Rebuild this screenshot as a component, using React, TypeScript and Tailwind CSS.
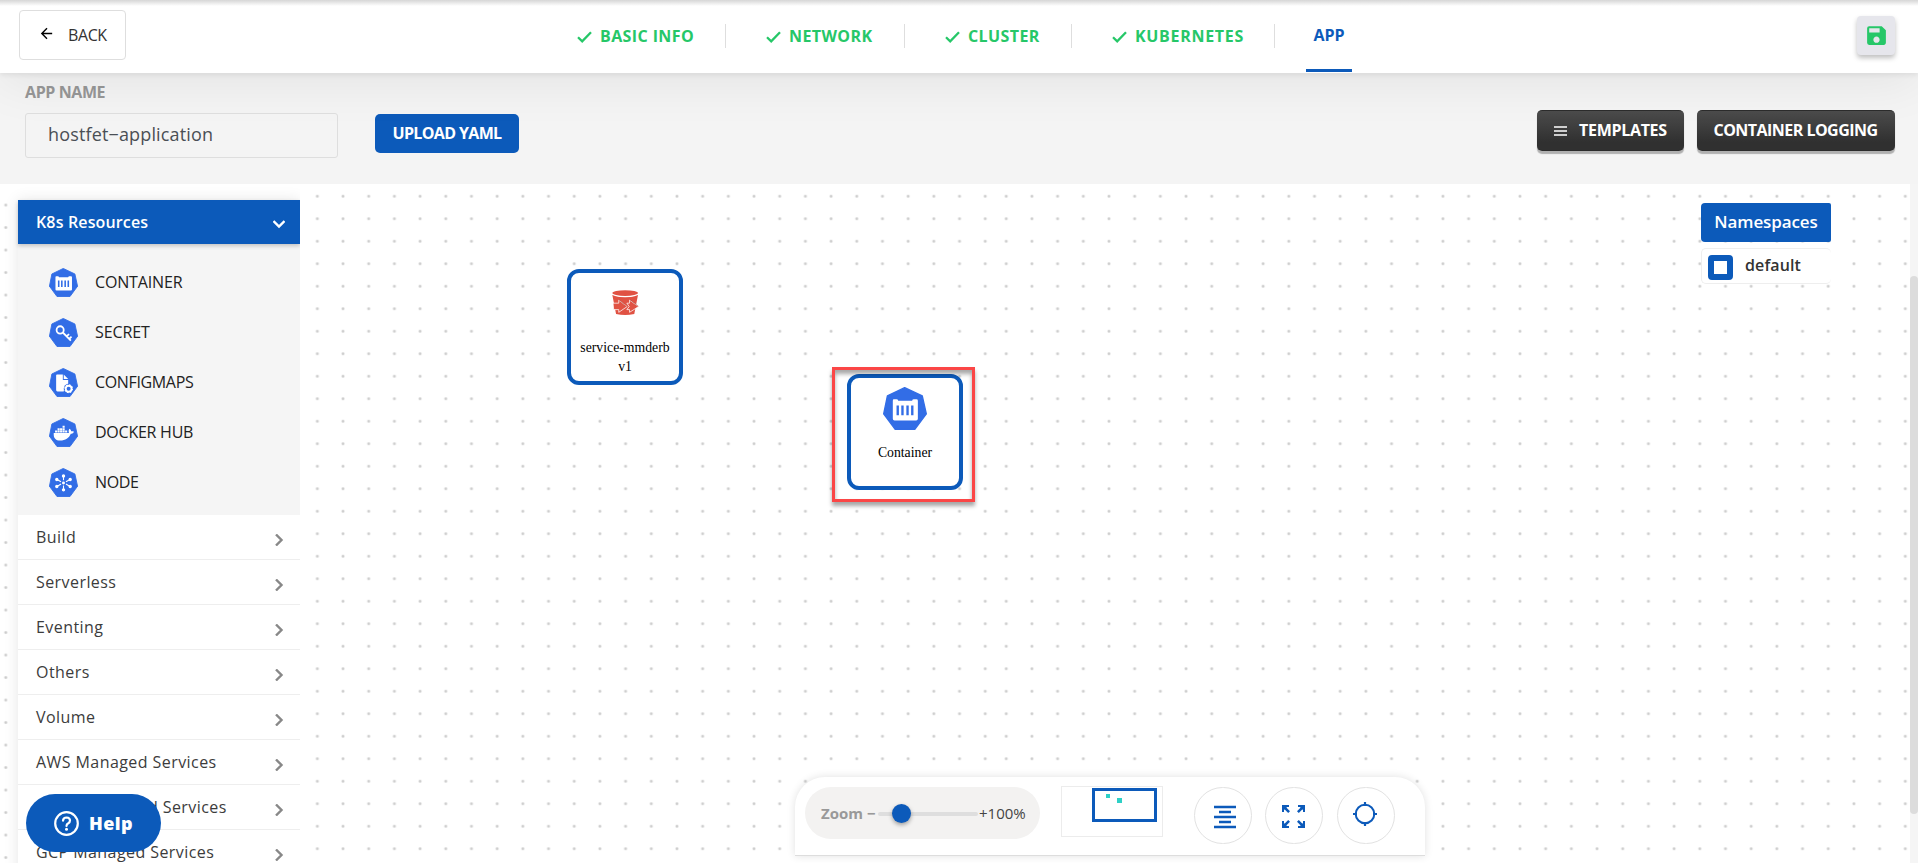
import type { ReactNode } from "react";
import { MdArrowBack, MdSave } from "react-icons/md";
import { FaDocker } from "react-icons/fa";

const STEPS = [
  { label: "BASIC INFO", width: "w-[93px]", tracking: "tracking-[0.4px]" },
  { label: "NETWORK", width: "w-[83px]", tracking: "tracking-[0.4px]" },
  { label: "CLUSTER", width: "w-[71px]", tracking: "tracking-[0.4px]" },
  { label: "KUBERNETES", width: "w-[107px]", tracking: "tracking-[0.7px]" },
];

function Heptagon({ className, children }: { className: string; children: ReactNode }) {
  return (
    <svg viewBox="0 0 130 126" className={className} preserveAspectRatio="none">
      <path
        d="M64 2 116 26 128 79 94 124H36L2 79 13 26Z"
        fill="#326de6"
        stroke="#326de6"
        strokeWidth="4"
        strokeLinejoin="round"
      />
      {children}
    </svg>
  );
}

function ContainerGlyph() {
  return (
    <>
      <path
        d="M32 36h8q4 0 5 4h41q1-4 5-4h8q4 0 4 4v53q0 5-5 5H34q-5 0-5-5V40q0-4 3-4Z"
        fill="#fff"
      />
      <path d="M40 54h7v29h-7zM54 54h7v29h-7zM69 54h7v29h-7zM83 54h7v29h-7z" fill="#326de6" />
    </>
  );
}

function SecretGlyph() {
  return (
    <g fill="none" stroke="#fff" strokeWidth="8">
      <circle cx="50" cy="52" r="16" />
      <path d="M62 63 98 98M78 80l12-10M90 91l11-10" />
    </g>
  );
}

function ConfigGlyph() {
  return (
    <>
      <path d="M34 28h28v24h24v22q-18 2-20 28H38q-6 0-6-6V32q0-4 4-4Z" fill="#fff" />
      <path d="M66 28l20 20H66Z" fill="#fff" />
      <circle cx="88" cy="90" r="22" fill="#326de6" />
      <circle cx="88" cy="90" r="13" fill="none" stroke="#fff" strokeWidth="8" />
      <circle cx="88" cy="90" r="17" fill="none" stroke="#fff" strokeWidth="5" strokeDasharray="7 6.3" />
    </>
  );
}

function NodeGlyph() {
  return (
    <g stroke="#fff" strokeWidth="5" fill="#fff">
      <path d="M65 33v20M65 76v21M34 49l20 11M96 49 76 60M34 81l20-11M96 81 76 70" />
      <circle cx="65" cy="65" r="4" />
      <circle cx="65" cy="35" r="5" />
      <circle cx="65" cy="95" r="5" />
      <circle cx="35" cy="50" r="5" />
      <circle cx="95" cy="50" r="5" />
      <circle cx="35" cy="80" r="5" />
      <circle cx="95" cy="80" r="5" />
    </g>
  );
}

const RESOURCES: { label: string; tracking: string; glyph: ReactNode }[] = [
  { label: "CONTAINER", tracking: "tracking-[-0.15px]", glyph: <ContainerGlyph /> },
  { label: "SECRET", tracking: "tracking-[-0.1px]", glyph: <SecretGlyph /> },
  { label: "CONFIGMAPS", tracking: "tracking-[-0.35px]", glyph: <ConfigGlyph /> },
  {
    label: "DOCKER HUB",
    tracking: "tracking-[-0.25px]",
    glyph: <FaDocker x={20} y={20} size={92} color="#fff" />,
  },
  { label: "NODE", tracking: "tracking-[-0.4px]", glyph: <NodeGlyph /> },
];

const GROUPS = [
  "Build",
  "Serverless",
  "Eventing",
  "Others",
  "Volume",
  "AWS Managed Services",
  "Azure Managed Services",
  "GCP Managed Services",
];

function TopBar() {
  return (
    <header className="relative z-20 flex h-[73px] shrink-0 bg-white shadow-[0_2px_5px_rgba(0,0,0,0.07),0_10px_50px_rgba(0,0,0,0.07)]">
      <div className="absolute inset-x-0 top-0 h-[6px] bg-linear-to-b from-[#d6d6d6] to-white" />
      <div className="w-[577px] pl-[19px] pt-[10px]">
        <button className="flex h-[50px] w-[107px] items-center rounded-[4px] border border-[#dedede] bg-white pb-[1px] pl-[18px] text-[16px] text-[#333]">
          <MdArrowBack className="mb-[2px] size-[17px] text-black" />
          <span className="ml-[13px] tracking-[-0.4px]">BACK</span>
        </button>
      </div>
      <nav className="flex text-[16px] font-bold text-[#26c768]">
        {STEPS.map((s) => (
          <div key={s.label} className="flex">
            <div className="flex h-[72px] items-center">
              <svg viewBox="0 0 15 12" className="mt-[2px] h-[12px] w-[15px]">
                <path d="M1 6.2 5.200 10.300 14 1.300" fill="none" stroke="currentColor" strokeWidth="2.300" />
              </svg>
              <span className={`ml-[8px] whitespace-nowrap ${s.width} ${s.tracking}`}>{s.label}</span>
            </div>
            <div className="ml-[32px] mr-[40px] mt-[24px] h-[24px] w-px bg-[#dedede]" />
          </div>
        ))}
        <div className="-ml-[9px] mb-[1px] flex w-[46px] items-center justify-center border-b-[3px] border-[#0c5aba] text-[#0c5aba]">
          APP
        </div>
      </nav>
      <button className="ml-auto mr-[23px] mt-[16px] flex h-[39px] w-[38px] items-center justify-center rounded-[4px] bg-[#e6e6ec] shadow-[0_3px_5px_rgba(0,0,0,0.25)]">
        <MdSave className="size-[25px] text-[#26c768]" />
      </button>
    </header>
  );
}

function AppForm() {
  const dark =
    "flex h-[41px] items-center rounded-[5px] border-y border-[#2c2c2c] bg-linear-to-b from-[#4c4c4c] to-[#303030] to-80% pb-[1px] text-[16px] font-bold text-white shadow-[0_3px_1px_rgba(0,0,0,0.28)]";
  return (
    <section className="flex h-[111px] shrink-0 bg-[#f4f4f4] pl-[25px] pr-[23px]">
      <div className="w-[313px] pt-[7px]">
        <label className="block h-[24px] text-[16px] font-bold leading-[24px] tracking-[-0.4px] text-[#979797]">
          APP NAME
        </label>
        <div className="mt-[9px] flex h-[45px] items-center rounded-[3px] border border-[#dedede] pb-[2px] pl-[22px] text-[18px] text-[#4a4f55]">
          <span className="tracking-[0.15px]">hostfet−application</span>
        </div>
      </div>
      <button className="ml-[37px] mt-[41px] h-[39px] w-[144px] rounded-[5px] bg-[#0c5aba] pb-[1px] text-[16px] font-bold tracking-[-0.65px] text-white">
        UPLOAD YAML
      </button>
      <div className="ml-auto mt-[37px] flex gap-[13px]">
        <button className={`${dark} w-[147px] pl-[17px]`}>
          <svg viewBox="0 0 13 10" className="mt-[1px] h-[10px] w-[13px]">
            <path d="M0 1h13M0 5h13M0 9h13" stroke="#fff" strokeWidth="1.3" />
          </svg>
          <span className="ml-[12px] tracking-[-0.3px]">TEMPLATES</span>
        </button>
        <button className={`${dark} w-[198px] justify-center pr-[1px]`}>
          <span className="whitespace-nowrap tracking-[-0.53px]">CONTAINER LOGGING</span>
        </button>
      </div>
    </section>
  );
}

function Chevron({ className, d }: { className: string; d: string }) {
  return (
    <svg viewBox="0 0 12 12" className={className}>
      <path d={d} fill="none" stroke="currentColor" strokeWidth="2.4" />
    </svg>
  );
}

function Sidebar() {
  return (
    <aside className="absolute left-0 top-0 h-[679px] w-[300px] overflow-hidden pl-[18px] pt-[16px]">
      <div className="h-[700px] bg-white shadow-[0_0_14px_rgba(0,0,0,0.1)]">
        <div className="relative flex h-[44px] items-center justify-between bg-[#0c5aba] pl-[18px] pr-[15px] text-white shadow-[0_2px_4px_rgba(0,0,0,0.2)]">
          <span className="text-[16px] font-semibold tracking-[0.15px]">K8s Resources</span>
          <Chevron className="mt-[4px] size-[12px]" d="M.5 3 6 8.5 11.5 3" />
        </div>
        <div className="h-[271px] bg-[#f5f5f5] pt-[13px]">
          {RESOURCES.map((r) => (
            <div key={r.label} className="flex h-[50px] items-center pl-[31px]">
              <Heptagon className="size-[29px]">{r.glyph}</Heptagon>
              <span className={`ml-[17px] text-[16px] text-[#222] ${r.tracking}`}>{r.label}</span>
            </div>
          ))}
        </div>
        {GROUPS.map((g) => (
          <div
            key={g}
            className="flex h-[45px] items-center justify-between border-b border-[#eee] pl-[18px] pr-[15px] text-[#3c3c3c]"
          >
            <span className="text-[16px] tracking-[0.43px]">{g}</span>
            <Chevron className="mt-[5px] size-[12px] text-[#888]" d="M3 .5 8.5 6 3 11.5" />
          </div>
        ))}
      </div>
    </aside>
  );
}

function DotGrid() {
  const dots = "bg-[radial-gradient(circle,#cccccc_0.8px,transparent_2px)] bg-[length:25.69px_22.5px]";
  return (
    <div className="absolute inset-0 flex">
      <div className={`w-[12px] ${dots} bg-[position:-7.1px_9.8px]`} />
      <div className="w-[288px]" />
      <div className={`w-[693px] ${dots} bg-[position:4.5px_1px]`} />
      <div className={`flex-1 ${dots} bg-[position:0.4px_1px]`} />
      <div className="w-[8px]" />
    </div>
  );
}

function BucketIcon() {
  return (
    <svg viewBox="0 0 80 74" className="h-[25px] w-[27px]" preserveAspectRatio="none">
      <path d="M1 15q38 11 76 0L66 71q-27 6-54 0Z" fill="#e05243" />
      <ellipse cx="39" cy="10.5" rx="39" ry="11" fill="#fff" />
      <ellipse cx="39" cy="9" rx="38" ry="8.5" fill="#e05243" />
      <g fill="#e05243" stroke="#fff" strokeWidth="2.2">
        <path d="M44 39h8V30l27 19-27 17V58H44l7-9Z" />
        <path d="M3 39h17V30l25 19-25 17V58H5Z" />
      </g>
      <path d="M20 29l24 19M53 29l25 19" stroke="#8c3123" strokeWidth="1.2" fill="none" />
    </svg>
  );
}

function CanvasNodes() {
  const card =
    "absolute flex h-[116px] w-[116px] flex-col items-center rounded-[12px] border-[4px] border-[#0c5aba] bg-white font-['Liberation_Serif',serif] text-[13.75px] text-black";
  return (
    <>
      <div className={`${card} left-[567px] top-[85px] pt-[17px]`}>
        <BucketIcon />
        <div className="mt-[24px] text-center leading-[18.5px]">
          service-mmderb
          <br />
          v1
        </div>
      </div>
      <div className={`${card} left-[847px] top-[190px] pt-[9px]`}>
        <Heptagon className="h-[43px] w-[44px]">
          <ContainerGlyph />
        </Heptagon>
        <div className="mt-[14px] text-center leading-[18.5px]">Container</div>
      </div>
      <div className="absolute left-[832px] top-[183px] h-[135px] w-[143px] border-[3px] border-[#fb4646] shadow-[0_4px_4px_rgba(0,0,0,0.35),inset_0_4px_4px_rgba(0,0,0,0.35)]" />
    </>
  );
}

function Namespaces() {
  return (
    <div className="absolute left-[1701px] top-[19px] w-[130px]">
      <div className="flex h-[39px] items-center justify-center rounded-l-[4px] rounded-r-[2px] bg-[#0c5aba] pb-[2px] text-[17px] font-semibold tracking-[-0.1px] text-white">
        Namespaces
      </div>
      <div className="mt-[6px] flex h-[36px] items-center rounded-[5px] border border-r-0 border-[#eee] bg-white pl-[6px] pt-[2px]">
        <div className="size-[25px] rounded-[4px] border-[6px] border-[#0c5aba] bg-white" />
        <span className="mb-[4px] ml-[12px] text-[16px] font-semibold tracking-[0.1px] text-[#333]">default</span>
      </div>
    </div>
  );
}

function Toolbar() {
  const round =
    "flex h-[57px] w-[58px] items-center justify-center rounded-full border border-[#e2e2e2] text-[#0c5aba]";
  return (
    <div className="absolute left-[795px] top-[593px] flex h-[79px] w-[630px] rounded-t-[30px] border-b border-[#ddd] bg-white pl-[10px] pt-[10px] shadow-[0_0_9px_rgba(0,0,0,0.12)]">
      <div className="flex h-[52px] w-[235px] items-center rounded-full bg-[#f3f2f1] pl-[16px] text-[15px]">
        <span className="w-[57px] whitespace-nowrap font-bold text-[#999]">Zoom −</span>
        <div className="relative mt-[2px] h-[4px] w-[100px] rounded-full bg-[#dedede]">
          <div className="absolute -top-[8px] left-[14px] size-[19px] rounded-full bg-[#0c5aba] shadow-[0_2px_4px_rgba(0,0,0,0.35)]" />
        </div>
        <span className="ml-[1px] text-[#444]">+100%</span>
      </div>
      <div className="relative -mt-[1px] ml-[21px] h-[51px] w-[102px] border border-[#ececec]">
        <div className="absolute left-[30px] top-[1px] h-[34px] w-[65px] border-[3px] border-[#0c5aba]">
          <div className="absolute left-[11px] top-[3px] size-[4px] bg-[#2ed0c6]" />
          <div className="absolute left-[22px] top-[7px] size-[5px] bg-[#2ed0c6]" />
        </div>
      </div>
      <div className="ml-[31px] flex">
        <div className={round}>
          <svg viewBox="0 0 22 24" className="ml-[3px] mt-[3px] h-[24px] w-[22px]">
            <path d="M0 2h22M5 7h12M0 12h22M5 17h12M0 22h22" stroke="currentColor" strokeWidth="2.4" />
          </svg>
        </div>
        <div className={`${round} ml-[13px]`}>
          <svg viewBox="0 0 23 23" className="mr-[1px] mt-[1px] size-[23px]">
            <path
              d="M0 0h7v2H3.8L8 6.2 6.2 8 2 3.8V7H0ZM23 0h-7v2h3.2L15 6.2 16.8 8 21 3.8V7h2ZM0 23h7v-2H3.8L8 16.8 6.2 15 2 19.2V16H0ZM23 23h-7v-2h3.2L15 16.8 16.8 15 21 19.2V16h2Z"
              fill="currentColor"
            />
            <path d="M0 0h7L0 7ZM23 0h-7l7 7ZM0 23h7l-7-7ZM23 23h-7l7-7Z" fill="currentColor" />
          </svg>
        </div>
        <div className={`${round} ml-[14px]`}>
          <svg viewBox="0 0 24 24" className="mb-[4px] mr-[2px] size-[24px]">
            <circle cx="12" cy="12" r="9.3" fill="none" stroke="currentColor" strokeWidth="2" />
            <path d="M12 0v4M12 20v4M0 12h4M20 12h4" stroke="currentColor" strokeWidth="2.2" />
          </svg>
        </div>
      </div>
    </div>
  );
}

function HelpButton() {
  return (
    <button className="absolute left-[26px] top-[610px] flex h-[58px] w-[135px] items-center rounded-full bg-[#0c5aba] pl-[28px] text-white">
      <svg viewBox="0 0 25 25" className="size-[25px]">
        <circle cx="12.5" cy="12.5" r="11.3" fill="none" stroke="#fff" strokeWidth="2.2" />
        <path
          d="M9 9.7q.3-3.2 3.6-3.2 3.4.2 3.4 3.1 0 1.7-1.7 2.7-1.8 1-1.8 2.7"
          fill="none"
          stroke="#fff"
          strokeWidth="2.2"
          strokeLinecap="round"
        />
        <circle cx="12.5" cy="18.2" r="1.5" fill="#fff" />
      </svg>
      <span className="ml-[10px] text-[18px] font-extrabold tracking-[0.4px]">Help</span>
    </button>
  );
}

export default function App() {
  return (
    <div className="flex h-[863px] w-[1918px] flex-col overflow-hidden bg-white font-['Open_Sans','Noto_Sans',sans-serif]">
      <TopBar />
      <AppForm />
      <main className="relative flex-1 overflow-hidden bg-white">
        <DotGrid />
        <Sidebar />
        <CanvasNodes />
        <Namespaces />
        <Toolbar />
        <HelpButton />
        <div className="absolute right-0 top-0 h-full w-[8px] bg-[#f5f5f5] pt-[92px]">
          <div className="h-[538px] rounded-[4px] bg-[#dcdcdc]" />
        </div>
      </main>
    </div>
  );
}
